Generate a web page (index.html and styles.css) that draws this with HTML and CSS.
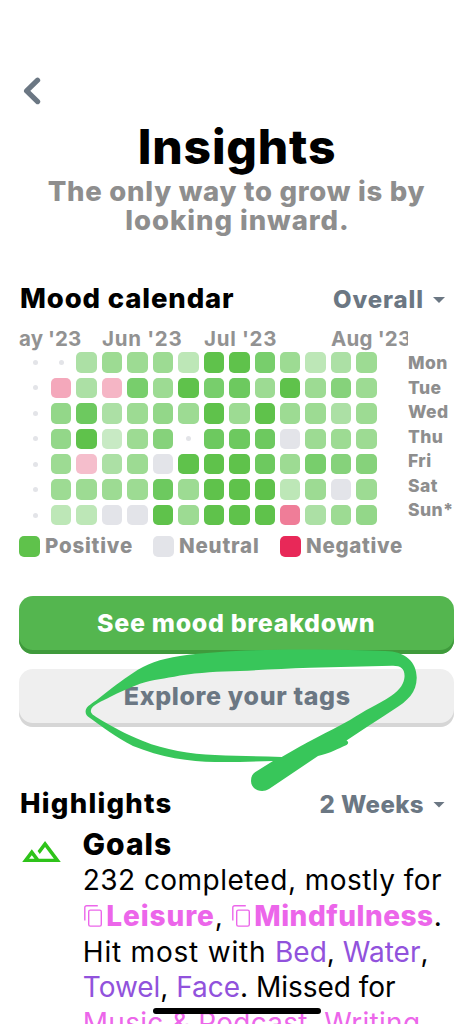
FILE: index.html
```html
<!DOCTYPE html>
<html lang="en">
<head>
<meta charset="utf-8">
<title>Insights</title>
<link rel="stylesheet" href="styles.css">
</head>
<body>
<svg class="defs" aria-hidden="true">
  <symbol id="copy" viewBox="0 0 18 22">
    <path d="M.8 15.500V2.800q0-2 2-2h11" fill="none" stroke="currentColor" stroke-width="1.4"/>
    <rect x="4.700" y="5.100" width="12.600" height="16" rx="1.600" fill="none" stroke="currentColor" stroke-width="1.4"/>
  </symbol>
</svg>
<main class="screen">
  <svg class="back" viewBox="0 0 18 28"><path d="M14.600 3.200 3.600 13.900l11 10.700" fill="none" stroke="#6b7783" stroke-width="5.2" stroke-linecap="round" stroke-linejoin="round"/></svg>

  <h1 class="title">Insights</h1>
  <p class="subtitle"><span class="sub-a">The only way to grow is by</span><span class="sub-b">looking inward.</span></p>

  <section class="calendar">
    <div class="section-head">
      <h2 class="mood-title">Mood calendar</h2>
      <div class="select overall"><span>Overall</span><i class="caret"></i></div>
    </div>
    <div class="cal-body">
      <div class="cal-main">
        <div class="months">
          <span class="m-may">ay '23</span><span class="m-jun">Jun '23</span><span class="m-jul">Jul '23</span><span class="m-aug">Aug '23</span>
        </div>
        <div class="cells">
          <i class="o"></i><i class="o"></i><i class="b"></i><i class="c"></i><i class="c"></i><i class="c"></i><i class="a"></i><i class="g"></i><i class="g"></i><i class="f"></i><i class="c"></i><i class="a"></i><i class="b"></i><i class="c"></i>
          <i class="o"></i><i class="p"></i><i class="b"></i><i class="q"></i><i class="f"></i><i class="c"></i><i class="g"></i><i class="f"></i><i class="h"></i><i class="c"></i><i class="g"></i><i class="c"></i><i class="e"></i><i class="c"></i>
          <i class="o"></i><i class="d"></i><i class="h"></i><i class="b"></i><i class="c"></i><i class="d"></i><i class="c"></i><i class="g"></i><i class="c"></i><i class="g"></i><i class="c"></i><i class="c"></i><i class="b"></i><i class="c"></i>
          <i class="o"></i><i class="d"></i><i class="g"></i><i class="l"></i><i class="c"></i><i class="e"></i><i class="o"></i><i class="h"></i><i class="h"></i><i class="h"></i><i class="n"></i><i class="c"></i><i class="c"></i><i class="c"></i>
          <i class="o"></i><i class="c"></i><i class="s"></i><i class="b"></i><i class="c"></i><i class="n"></i><i class="g"></i><i class="g"></i><i class="g"></i><i class="h"></i><i class="c"></i><i class="f"></i><i class="e"></i><i class="e"></i>
          <i class="o"></i><i class="c"></i><i class="c"></i><i class="c"></i><i class="c"></i><i class="h"></i><i class="c"></i><i class="g"></i><i class="g"></i><i class="g"></i><i class="a"></i><i class="c"></i><i class="n"></i><i class="c"></i>
          <i class="o"></i><i class="a"></i><i class="a"></i><i class="n"></i><i class="n"></i><i class="g"></i><i class="c"></i><i class="g"></i><i class="g"></i><i class="g"></i><i class="r"></i><i class="b"></i><i class="c"></i><i class="d"></i>
        </div>
      </div>
      <div class="days"><span>Mon</span><span>Tue</span><span>Wed</span><span>Thu</span><span>Fri</span><span>Sat</span><span>Sun*</span></div>
    </div>
    <div class="legend">
      <span class="key positive"><i class="g"></i>Positive</span>
      <span class="key neutral"><i class="n"></i>Neutral</span>
      <span class="key negative"><i class="x"></i>Negative</span>
    </div>
  </section>

  <div class="actions">
    <button class="btn primary">See mood breakdown</button>
    <button class="btn secondary">Explore your tags</button>
    <svg class="scribble" viewBox="80 640 345 160">
      <path fill="#38c65a" d="M85.6 711C86 706 93 703 98 699C112 688 122 680 133 673C146 664 160 659 180 656C215 651 260 649.7 300 649.6C335 649.5 365 650.5 385 651C406 651 417 663 416.7 678C416.500 692 408 701 393 710C378 720 362 730 346.500 740.500C349 742 348.500 744 346 745.200C338 748.500 331 753 318 756L269 789C262 793.500 251 790 251 781C251 776 253 773 257 771L273 761C255 761.300 235 762.300 215 762C190 762 160 757 133 746C115 737 103 727 90 718C86.500 715.500 85.500 714 85.600 711ZM90.800 711C91 714 94 715.500 97 717.500C111 726 125 734 143 741C165 750 190 754 215 755C238 756.300 260 756 281.700 757C305 743 328 732 350 720C365 710 379 704 391 696C401 689 404 683 404.500 677C405 669 401 665.500 392 665.800C365 666.500 337 667 310 667.800C285 668.800 262 669.700 240 671C218 671.500 200 672.500 180 675.500C164 679 154 679 140 683.700C129 688 119 692 110 697C103 701 91 705 90.800 711Z"/>
    </svg>
  </div>

  <section class="highlights">
    <div class="section-head">
      <h2 class="hl-title">Highlights</h2>
      <div class="select weeks"><span>2 Weeks</span><i class="caret"></i></div>
    </div>
    <div class="entry">
      <svg class="peaks" viewBox="1 6 22 12"><path fill="#2ec31a" d="M14 6l-4.220 5.630 1.250 1.670L14 9.330 19 16h-8.460l-4.010-5.370L1 18h22L14 6zM5 16l1.520-2.030L8.040 16H5z"/></svg>
      <div class="entry-text">
        <h3 class="goals">Goals</h3>
        <p class="copy">
          <span class="line l1">232 completed, mostly for</span>
          <span class="line l2"><svg class="ic"><use href="#copy"/></svg><b class="w1">Leisure</b>, <svg class="ic"><use href="#copy"/></svg><b class="w2">Mindfulness</b>.</span>
          <span class="line l3"><span class="lead">Hit most with </span><em>Bed</em>, <em>Water</em>,</span>
          <span class="line l4"><em>Towel</em>, <em>Face</em>. Missed for</span>
          <span class="line l5"><u>Music &amp; Podcast</u>, <u>Writing</u></span>
        </p>
      </div>
    </div>
  </section>
  <div class="home-bar"></div>
</main>
</body>
</html>
```
FILE: styles.css
```css
* { box-sizing: border-box; margin: 0; padding: 0; }
body { background: #fff; font-family: Inter, "Liberation Sans", sans-serif; color: #000; }
.defs { position: absolute; width: 0; height: 0; }
.screen { position: relative; width: 473px; height: 1024px; overflow: hidden; padding: 77px 19px 0; }

.back { display: block; width: 18px; height: 28px; margin-left: 4px; }
.title { margin-top: 17px; font-size: 48px; line-height: 50px; font-weight: 800; letter-spacing: .8px; text-align: center; padding-left: 1px; }
.subtitle { margin-top: 4.5px; font-size: 27.5px; line-height: 29.3px; font-weight: 800; color: #8e8e8e; text-align: center; }
.subtitle span { display: block; white-space: nowrap; }
.sub-a { letter-spacing: .74px; }
.sub-b { letter-spacing: .95px; padding-left: 2px; }

.calendar { margin-top: 47px; }
.section-head { display: flex; justify-content: space-between; align-items: baseline; height: 32px; line-height: 32px; padding: 0 9px 0 1px; }
.section-head h2 { font-size: 27.5px; font-weight: 800; }
.mood-title { letter-spacing: .85px; }
.hl-title { letter-spacing: 1.25px; }
.select { display: flex; align-items: center; font-size: 24px; font-weight: 800; color: #6b7783; }
.overall { letter-spacing: .9px; }
.weeks { letter-spacing: .4px; }
.caret { width: 12px; height: 6px; margin-left: 9px; background: #6b7783; clip-path: polygon(0 0, 100% 0, 50% 100%); }

.cal-body { display: flex; margin-top: 12px; }
.cal-main { width: 389px; overflow: hidden; }
.months { display: flex; height: 24px; line-height: 25px; font-size: 20.5px; font-weight: 700; color: #929292; white-space: nowrap; }
.months span { flex: none; letter-spacing: .7px; }
.m-jun { width: 102px; }
.m-jul { width: 127px; }
.months .m-may { width: 83px; letter-spacing: .1px; }
.months .m-aug { letter-spacing: .2px; }
.cells { display: grid; grid-template-columns: repeat(14, 20.5px); grid-auto-rows: 20.5px; gap: 4.97px; margin: 2px 0 0 6.3px; }
.cells i, .key i { border-radius: 5px; }
.cells .o { width: 5px; height: 5px; border-radius: 50%; background: #e3e4e8; place-self: center; }
.a { background: #bde7b7; }
.b { background: #ace0a5; }
.c { background: #9ddb93; }
.d { background: #93d789; }
.e { background: #86d27b; }
.f { background: #78ce6c; }
.h { background: #6dc95f; }
.g { background: #5fc24b; }
.l { background: #c8eac4; }
.n { background: #e3e4e9; }
.p { background: #f4a8bb; }
.q { background: #f5b5c5; }
.s { background: #f5becc; }
.r { background: #ef7d98; }
.x { background: #e82858; }
.days { display: flex; flex-direction: column; margin-top: 25.4px; font-size: 17.5px; line-height: 24.45px; font-weight: 800; color: #8e8e8e; letter-spacing: .4px; }
.legend { display: flex; margin-top: 10px; font-size: 20.5px; line-height: 22px; font-weight: 800; color: #8e8e8e; }
.key { display: flex; align-items: center; gap: 5.5px; letter-spacing: .8px; white-space: nowrap; }
.key i { width: 20.5px; height: 20.5px; }
.positive { width: 134px; }
.neutral { width: 127px; }
.negative { letter-spacing: .7px; }

.actions { position: relative; display: flex; flex-direction: column; gap: 15px; margin-top: 38.2px; }
.btn { display: block; width: 434.5px; height: 58px; border: 0; border-radius: 14px; font: 800 25px/54px Inter, "Liberation Sans", sans-serif; text-align: center; padding-bottom: 4px; }
.primary { color: #fff; background: #54b64f; box-shadow: inset 0 -4px #3f9a3c; letter-spacing: .68px; }
.secondary { color: #6b7783; background: #efefef; box-shadow: inset 0 -4px #d6d6d6; letter-spacing: .65px; padding-left: 2px; }
.scribble { position: absolute; left: 61px; top: 44.3px; width: 345px; height: 160px; }

.highlights { margin-top: 60px; }
.entry { display: flex; }
.peaks { width: 39px; height: 21.3px; margin: 22px 22px 0 2.5px; flex: none; }
.goals { font-size: 30px; line-height: 34px; font-weight: 800; letter-spacing: 1px; margin-top: 8px; }
.copy { font-size: 28px; line-height: 35.8px; margin-top: 2.5px; margin-left: .3px; }
.line { display: flex; align-items: baseline; white-space: pre; height: 35.8px; }
.line em, .line u { font-style: normal; text-decoration: none; }
.line em { color: #9152dc; }
.line b, .line u, .ic { color: #ec66ea; }
.line b { font-weight: 800; }
.ic { width: 18px; height: 22px; flex: none; position: relative; top: 1.5px; margin: 0 4.5px 0 1px; }
.l1 { letter-spacing: .45px; }
.w1 { letter-spacing: .9px; }
.w2 { letter-spacing: .5px; }
.l3 { letter-spacing: 0; }
.lead { letter-spacing: .8px; }
.l4 { letter-spacing: -.03px; }
.l5 { letter-spacing: .28px; }
.home-bar { position: absolute; left: 153px; top: 1008px; width: 168px; height: 6px; border-radius: 3px; background: #000; }
```
